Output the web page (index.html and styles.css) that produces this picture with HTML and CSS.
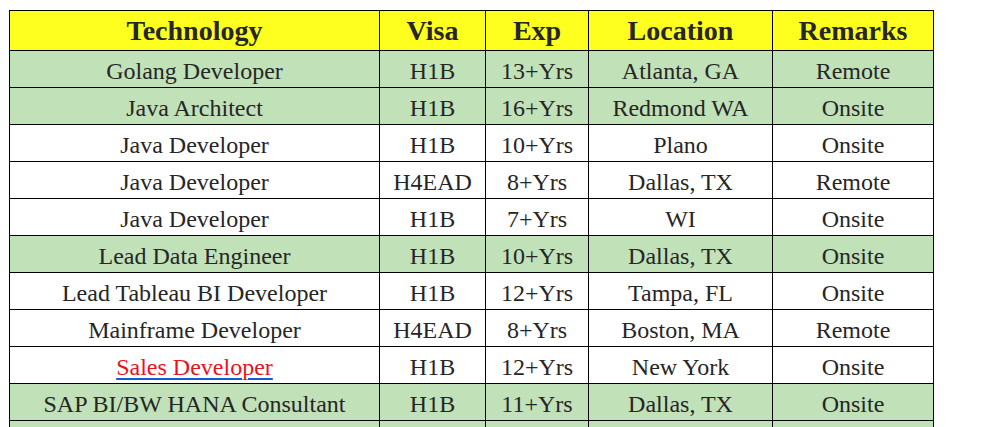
FILE: index.html
```html
<!DOCTYPE html>
<html>
<head>
<meta charset="utf-8">
<link rel="stylesheet" href="styles.css">
</head>
<body>
<table class="jobs">
  <colgroup>
    <col class="c-tech"><col class="c-visa"><col class="c-exp"><col class="c-loc"><col class="c-rem">
  </colgroup>
  <thead>
    <tr class="head"><th>Technology</th><th>Visa</th><th>Exp</th><th>Location</th><th>Remarks</th></tr>
  </thead>
  <tbody>
    <tr class="green"><td>Golang Developer</td><td>H1B</td><td>13+Yrs</td><td>Atlanta, GA</td><td>Remote</td></tr>
    <tr class="green"><td>Java Architect</td><td>H1B</td><td>16+Yrs</td><td>Redmond WA</td><td>Onsite</td></tr>
    <tr><td>Java Developer</td><td>H1B</td><td>10+Yrs</td><td>Plano</td><td>Onsite</td></tr>
    <tr><td>Java Developer</td><td>H4EAD</td><td>8+Yrs</td><td>Dallas, TX</td><td>Remote</td></tr>
    <tr><td>Java Developer</td><td>H1B</td><td>7+Yrs</td><td>WI</td><td>Onsite</td></tr>
    <tr class="green"><td>Lead Data Engineer</td><td>H1B</td><td>10+Yrs</td><td>Dallas, TX</td><td>Onsite</td></tr>
    <tr><td>Lead Tableau BI Developer</td><td>H1B</td><td>12+Yrs</td><td>Tampa, FL</td><td>Onsite</td></tr>
    <tr><td>Mainframe Developer</td><td>H4EAD</td><td>8+Yrs</td><td>Boston, MA</td><td>Remote</td></tr>
    <tr><td><a class="link" href="#">Sales Developer</a></td><td>H1B</td><td>12+Yrs</td><td>New York</td><td>Onsite</td></tr>
    <tr class="green"><td>SAP BI/BW HANA Consultant</td><td>H1B</td><td>11+Yrs</td><td>Dallas, TX</td><td>Onsite</td></tr>
    <tr class="green"><td>&nbsp;</td><td>&nbsp;</td><td>&nbsp;</td><td>&nbsp;</td><td>&nbsp;</td></tr>
  </tbody>
</table>
</body>
</html>
```
FILE: styles.css
```css
html, body {
  margin: 0;
  padding: 0;
  background: #ffffff;
  overflow: hidden;
}
body {
  padding: 10px 0 0 9px;
  font-family: "Liberation Serif", "DejaVu Serif", serif;
  color: #262626;
}
.jobs {
  border-collapse: collapse;
  table-layout: fixed;
  width: 924px;
}
.c-tech { width: 370px; }
.c-visa { width: 106px; }
.c-exp { width: 103px; }
.c-loc { width: 184px; }
.c-rem { width: 161px; }
.jobs th, .jobs td {
  border: 1px solid #000000;
  text-align: center;
  padding: 0;
  white-space: nowrap;
  overflow: hidden;
  line-height: 1;
}
.jobs th {
  height: 38px;
  padding-top: 1px;
  font-size: 28px;
  font-weight: bold;
  background: #ffff1f;
}
.jobs td {
  height: 33px;
  padding-top: 3px;
  font-size: 24px;
}
.green td {
  background: #c1e1b9;
}
.link {
  color: #e8141c;
  text-decoration: underline;
  text-decoration-color: #1559d4;
  text-decoration-thickness: 2px;
  text-underline-offset: 3px;
}
```
